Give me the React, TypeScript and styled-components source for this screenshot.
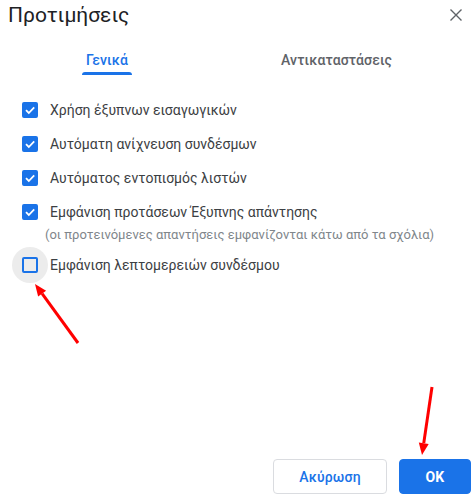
import React from "react";
import styled, { createGlobalStyle } from "styled-components";

const Global = createGlobalStyle`
  html, body { margin: 0; padding: 0; background: #fff; }
  body { font-family: Roboto, "Noto Sans", Arial, sans-serif; }
`;

const Page = styled.div`
  position: relative;
  width: 476px;
  height: 500px;
  display: flex;
  flex-direction: column;
  background: #fff;
  overflow: hidden;
`;

const Header = styled.header`
  display: flex;
  justify-content: space-between;
  align-items: flex-start;
  padding: 1px 8px 0 8px;
`;

const Title = styled.h1`
  margin: 0;
  font-family: Roboto, Arial, sans-serif;
  font-weight: 400;
  font-size: 21px;
  line-height: 28px;
  color: #202124;
`;

const CloseButton = styled.button`
  border: 0;
  background: transparent;
  padding: 0;
  margin-top: 2px;
  width: 24px;
  height: 24px;
  display: flex;
  align-items: center;
  justify-content: center;
  cursor: pointer;
`;

const Tabs = styled.nav`
  display: flex;
  padding: 21px 0 0 82px;
  gap: 145px;
`;

const Tab = styled.div<{ $active?: boolean }>`
  position: relative;
  padding: 0 4px 5px;
  font-size: 14px;
  line-height: 20px;
  font-weight: 500;
  letter-spacing: 0.1px;
  color: ${(p) => (p.$active ? "#1a73e8" : "#5f6368")};
  &::after {
    content: "";
    display: ${(p) => (p.$active ? "block" : "none")};
    position: absolute;
    left: 0;
    right: 0;
    bottom: 0;
    height: 3px;
    border-radius: 3px 3px 0 0;
    background: #1a73e8;
  }
`;

const Options = styled.div`
  display: flex;
  flex-direction: column;
  padding-top: 18px;
`;

const Row = styled.label`
  display: flex;
  align-items: center;
  height: 34px;
  padding-left: 12px;
`;

const Ripple = styled.span<{ $focused?: boolean }>`
  width: 36px;
  height: 36px;
  border-radius: 50%;
  flex: none;
  display: flex;
  align-items: center;
  justify-content: center;
  background: ${(p) => (p.$focused ? "#ececec" : "transparent")};
`;

const Box = styled.span<{ $checked?: boolean }>`
  box-sizing: border-box;
  width: 16px;
  height: 16px;
  border-radius: 2px;
  display: flex;
  align-items: center;
  justify-content: center;
  background: ${(p) => (p.$checked ? "#1a73e8" : "transparent")};
  border: 2px solid #1a73e8;
`;

const Label = styled.span`
  margin-left: 2px;
  font-size: 14px;
  line-height: 20px;
  color: #3c4043;
`;

const Hint = styled.div`
  margin: -2px 0 5px;
  padding-left: 45px;
  font-size: 13px;
  line-height: 16px;
  color: #80868b;
`;

const Footer = styled.footer`
  margin-top: auto;
  display: flex;
  justify-content: flex-end;
  gap: 12px;
  padding: 0 5px 6px 0;
`;

const Button = styled.button<{ $primary?: boolean }>`
  box-sizing: border-box;
  height: 35px;
  width: ${(p) => (p.$primary ? "72px" : "114px")};
  border-radius: 4px;
  border: 1px solid ${(p) => (p.$primary ? "#1a73e8" : "#dadce0")};
  background: ${(p) => (p.$primary ? "#1a73e8" : "#fff")};
  color: ${(p) => (p.$primary ? "#fff" : "#1a73e8")};
  font-family: Roboto, Arial, sans-serif;
  font-size: 14px;
  font-weight: ${(p) => (p.$primary ? 700 : 500)};
  letter-spacing: 0.2px;
  cursor: pointer;
`;

const Annotations = styled.svg`
  position: absolute;
  left: 0;
  top: 0;
  pointer-events: none;
`;

const Check = () => (
  <svg width="12" height="12" viewBox="0 0 12 12">
    <path d="M2 6.2 L4.8 9 L10.2 3.4" fill="none" stroke="#fff" strokeWidth="1.8" />
  </svg>
);

const options = [
  { text: "Χρήση έξυπνων εισαγωγικών", checked: true },
  { text: "Αυτόματη ανίχνευση συνδέσμων", checked: true },
  { text: "Αυτόματος εντοπισμός λιστών", checked: true },
  { text: "Εμφάνιση προτάσεων Έξυπνης απάντησης", checked: true },
];

export default function App() {
  return (
    <>
      <Global />
      <Page>
        <Header>
          <Title>Προτιμήσεις</Title>
          <CloseButton aria-label="Κλείσιμο">
            <svg width="12" height="12" viewBox="0 0 12 12">
              <path d="M0.5 0.5 L11.5 11.5 M11.5 0.5 L0.5 11.5" stroke="#5f6368" strokeWidth="1.4" />
            </svg>
          </CloseButton>
        </Header>
        <Tabs>
          <Tab $active>Γενικά</Tab>
          <Tab>Αντικαταστάσεις</Tab>
        </Tabs>
        <Options>
          {options.map((o) => (
            <Row key={o.text}>
              <Ripple>
                <Box $checked={o.checked}>{o.checked && <Check />}</Box>
              </Ripple>
              <Label>{o.text}</Label>
            </Row>
          ))}
          <Hint>(οι προτεινόμενες απαντήσεις εμφανίζονται κάτω από τα σχόλια)</Hint>
          <Row>
            <Ripple $focused>
              <Box />
            </Ripple>
            <Label>Εμφάνιση λεπτομερειών συνδέσμου</Label>
          </Row>
        </Options>
        <Footer>
          <Button>Ακύρωση</Button>
          <Button $primary>OK</Button>
        </Footer>
        <Annotations width="476" height="500" viewBox="0 0 476 500">
          <line x1="78" y1="343" x2="42.1" y2="293.7" stroke="#ff0000" strokeWidth="3" />
          <polygon points="35,284 46.1,290.8 38.1,296.6" fill="#ff0000" />
          <line x1="432" y1="387" x2="423.75" y2="443.1" stroke="#ff0000" strokeWidth="3" />
          <polygon points="422,455 428.7,443.9 418.8,442.4" fill="#ff0000" />
        </Annotations>
      </Page>
    </>
  );
}
